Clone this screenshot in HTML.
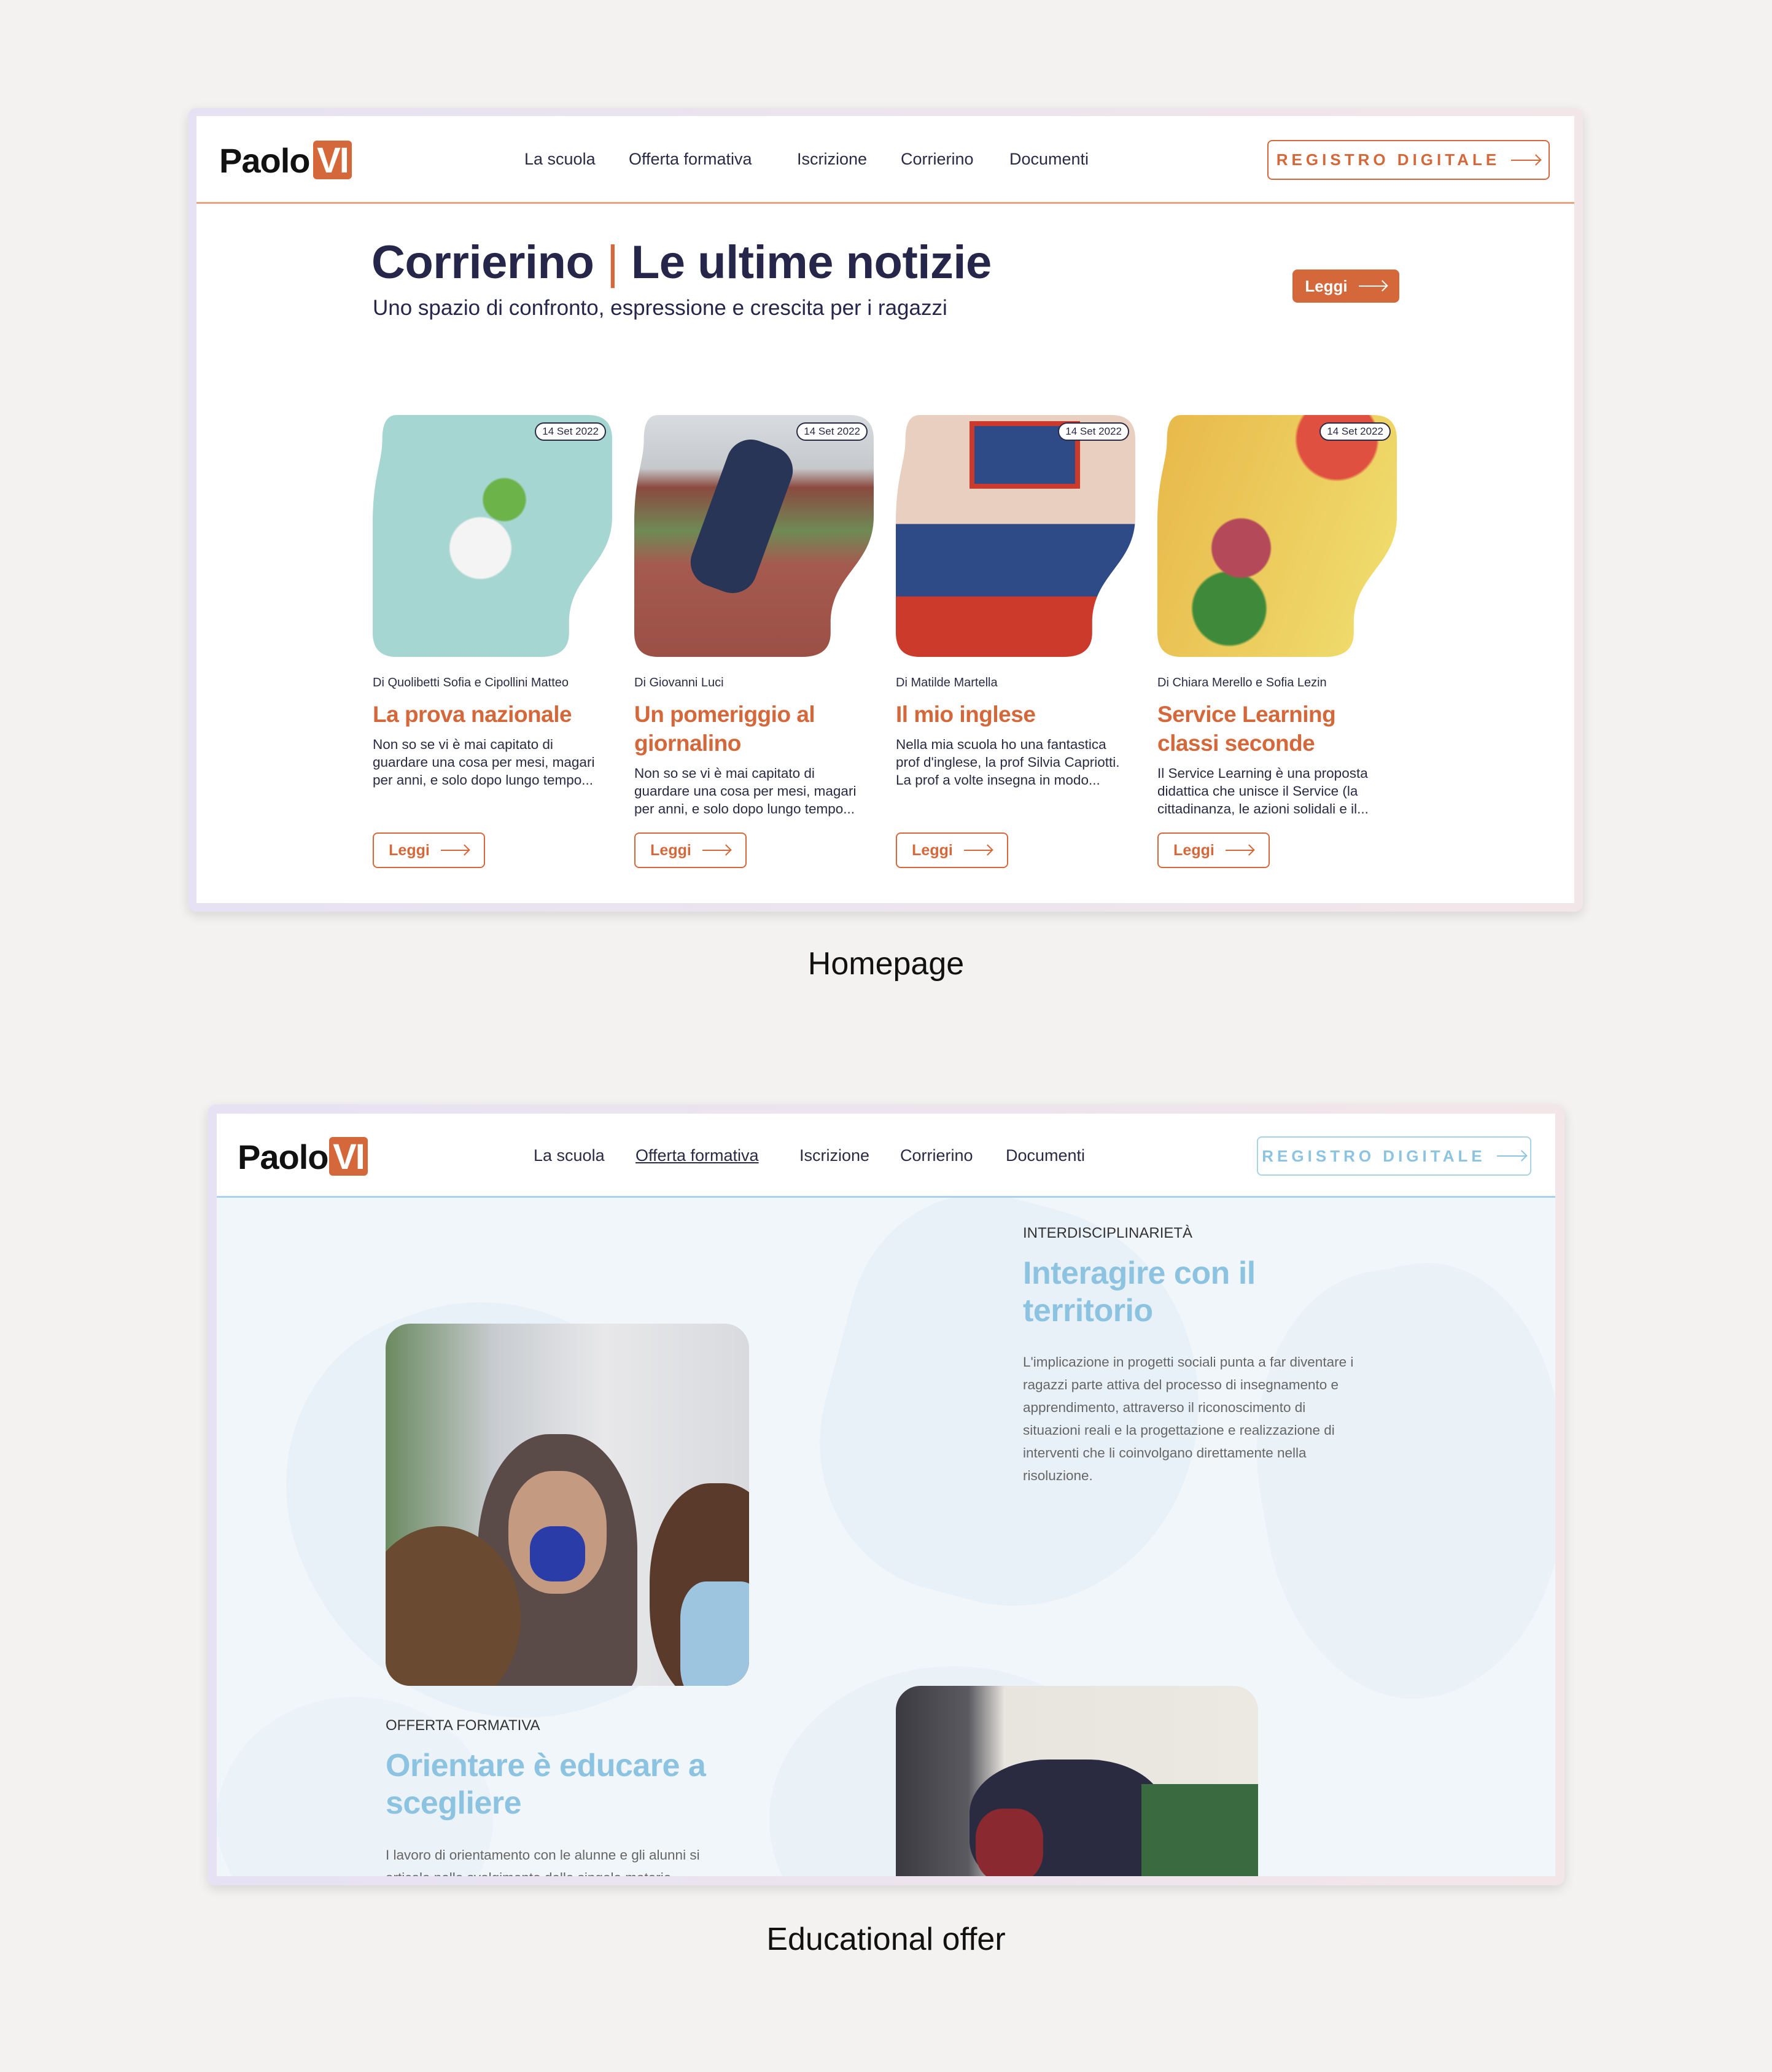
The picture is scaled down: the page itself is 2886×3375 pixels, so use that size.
<!DOCTYPE html>
<html><head><meta charset="utf-8">
<style>
*{margin:0;padding:0;box-sizing:border-box}
body{width:2886px;height:3375px;background:#f3f2f0;font-family:"Liberation Sans",sans-serif;position:relative;overflow:hidden;color:#2a2a45}
.abs{position:absolute}
.frame{position:absolute;border-radius:14px;background:linear-gradient(90deg,#e6e2f3,#f3e6e9);box-shadow:0 6px 18px rgba(0,0,0,.12)}
.inner{position:absolute;background:#fff;overflow:hidden}
.logo{position:absolute;font-weight:bold;font-size:56px;color:#111;letter-spacing:-1px;line-height:1}
.vi{position:absolute;background:#d4683a;color:#fff;font-weight:bold;border-radius:6px;text-align:center;letter-spacing:-2px}
.nav{position:absolute;font-size:27px;color:#2a2a45;white-space:nowrap}
.btn{position:absolute;border:2px solid #d4683a;border-radius:8px;color:#d4683a;font-weight:bold;display:flex;align-items:center;justify-content:center;white-space:nowrap}
.arrow{display:inline-block;position:relative;height:2px;background:currentColor;margin-left:18px}
.arrow:after{content:"";position:absolute;right:1px;top:-6px;width:11px;height:11px;border-top:2px solid currentColor;border-right:2px solid currentColor;transform:rotate(45deg)}
.img{position:absolute;top:676px;width:390px;height:394px;clip-path:url(#blob)}
.date{position:absolute;top:12px;right:10px;background:#fff;border:2px solid #2a2a45;border-radius:16px;font-size:17px;padding:3px 10px;color:#2a2a45}
.author{position:absolute;top:1101px;font-size:20px;color:#2a2a45;white-space:nowrap}
.ctitle{position:absolute;top:1140px;font-size:37px;font-weight:bold;color:#d4683a;line-height:47px;letter-spacing:-0.5px}
.cbody{position:absolute;font-size:22.5px;line-height:29px;color:#2a2a45}
.lb{top:1356px;width:183px;height:58px;font-size:25px}
.caption{position:absolute;width:100%;text-align:center;font-size:52px;color:#111}
</style></head><body>
<svg width="0" height="0" style="position:absolute"><defs>
<clipPath id="blob" clipPathUnits="objectBoundingBox"><path d="M0.1,0 H0.9 Q1,0 1,0.1 V0.42 C1,0.62 0.82,0.66 0.82,0.86 V0.9 Q0.82,1 0.7,1 H0.1 Q0,1 0,0.9 V0.45 C0,0.25 0.04,0.2 0.04,0.1 Q0.04,0 0.1,0 Z"/></clipPath>
</defs></svg>

<div class="frame" style="left:306px;top:176px;width:2272px;height:1309px"></div>
<div class="inner" style="left:320px;top:189px;width:2244px;height:1282px">
  <div class="abs" style="left:0;top:140px;width:100%;height:3px;background:#e8a283"></div>
</div>
<div class="logo" style="left:357px;top:234px">Paolo</div>
<div class="vi" style="left:510px;top:229px;width:63px;height:63px;font-size:58px;line-height:66px">VI</div>
<div class="nav" style="left:854px;top:244px">La scuola</div>
<div class="nav" style="left:1024px;top:244px">Offerta formativa</div>
<div class="nav" style="left:1298px;top:244px">Iscrizione</div>
<div class="nav" style="left:1467px;top:244px">Corrierino</div>
<div class="nav" style="left:1644px;top:244px">Documenti</div>
<div class="btn" style="left:2064px;top:228px;width:460px;height:65px;font-size:26px;letter-spacing:6px">REGISTRO DIGITALE<span class="arrow" style="width:48px"></span></div>

<div class="abs" style="left:605px;top:384px;font-size:76px;font-weight:bold;color:#26264a;white-space:nowrap;letter-spacing:-0.5px">Corrierino <span style="color:#d4683a;font-weight:normal">|</span> Le ultime notizie</div>
<div class="abs" style="left:607px;top:482px;font-size:35px;color:#26264a;white-space:nowrap">Uno spazio di confronto, espressione e crescita per i ragazzi</div>
<div class="btn" style="left:2105px;top:439px;width:174px;height:54px;background:#d4683a;color:#fff;font-size:26px">Leggi<span class="arrow" style="width:46px"></span></div>

<div class="img" style="left:607px;background:radial-gradient(circle at 45% 55%,#f4f4f4 0 16%,transparent 17%),radial-gradient(circle at 55% 35%,#6cb34a 0 10%,transparent 11%),#a6d6d1"><div class="date">14 Set 2022</div></div>
<div class="img" style="left:1033px;background:linear-gradient(180deg,#d8dce0 0%,#c5c9cc 22%,#8a4a40 30%,#6f8a55 48%,#a55a4f 62%,#9b5046 100%)"><div class="abs" style="left:120px;top:40px;width:110px;height:250px;background:#283556;border-radius:40px;transform:rotate(20deg)"></div><div class="date">14 Set 2022</div></div>
<div class="img" style="left:1459px;background:linear-gradient(180deg,#e9cfbf 0 45%,#2e4a87 45% 75%,#cc3a2c 75%)"><div class="abs" style="left:120px;top:10px;width:180px;height:110px;background:#2e4a87;border:8px solid #cc3a2c"></div><div class="date">14 Set 2022</div></div>
<div class="img" style="left:1885px;background:radial-gradient(circle at 35% 55%,#b4495a 0 14%,transparent 15%),radial-gradient(circle at 30% 80%,#3f8a3a 0 14%,transparent 15%),radial-gradient(circle at 75% 10%,#e05040 0 14%,transparent 15%),linear-gradient(110deg,#e8b84a,#f0e070)"><div class="date">14 Set 2022</div></div>

<div class="author" style="left:607px">Di Quolibetti Sofia e Cipollini Matteo</div>
<div class="author" style="left:1033px">Di Giovanni Luci</div>
<div class="author" style="left:1459px">Di Matilde Martella</div>
<div class="author" style="left:1885px">Di Chiara Merello e Sofia Lezin</div>

<div class="ctitle" style="left:607px">La prova nazionale</div>
<div class="ctitle" style="left:1033px">Un pomeriggio al<br>giornalino</div>
<div class="ctitle" style="left:1459px">Il mio inglese</div>
<div class="ctitle" style="left:1885px">Service Learning<br>classi seconde</div>

<div class="cbody" style="left:607px;top:1198px">Non so se vi è mai capitato di<br>guardare una cosa per mesi, magari<br>per anni, e solo dopo lungo tempo...</div>
<div class="cbody" style="left:1033px;top:1245px">Non so se vi è mai capitato di<br>guardare una cosa per mesi, magari<br>per anni, e solo dopo lungo tempo...</div>
<div class="cbody" style="left:1459px;top:1198px">Nella mia scuola ho una fantastica<br>prof d'inglese, la prof Silvia Capriotti.<br>La prof a volte insegna in modo...</div>
<div class="cbody" style="left:1885px;top:1245px">Il Service Learning è una proposta<br>didattica che unisce il Service (la<br>cittadinanza, le azioni solidali e il...</div>

<div class="btn lb" style="left:607px">Leggi<span class="arrow" style="width:46px"></span></div>
<div class="btn lb" style="left:1033px">Leggi<span class="arrow" style="width:46px"></span></div>
<div class="btn lb" style="left:1459px">Leggi<span class="arrow" style="width:46px"></span></div>
<div class="btn lb" style="left:1885px">Leggi<span class="arrow" style="width:46px"></span></div>

<div class="caption" style="top:1540px">Homepage</div>

<div class="frame" style="left:338px;top:1799px;width:2210px;height:1272px"></div>
<div class="inner" style="left:353px;top:1814px;width:2180px;height:1242px;background:#f1f6fa">
  <div class="abs" style="left:130px;top:300px;width:650px;height:700px;background:#e9f1f8;border-radius:45% 55% 40% 60%;transform:rotate(-20deg)"></div>
  <div class="abs" style="left:1000px;top:150px;width:600px;height:650px;background:#e9f1f8;border-radius:40% 60% 55% 45%;transform:rotate(15deg)"></div>
  <div class="abs" style="left:1700px;top:250px;width:500px;height:700px;background:#eaf2f8;border-radius:50% 40% 60% 45%;transform:rotate(-10deg)"></div>
  <div class="abs" style="left:900px;top:900px;width:600px;height:500px;background:#eaf2f8;border-radius:50%"></div>
  <div class="abs" style="left:0;top:950px;width:450px;height:400px;background:#ebf2f8;border-radius:50%"></div>
  <div class="abs" style="left:0;top:0;width:100%;height:134px;background:#fff"></div>
  <div class="abs" style="left:0;top:134px;width:100%;height:3px;background:#a9d1e8"></div>
</div>
<div class="logo" style="left:387px;top:1857px">Paolo</div>
<div class="vi" style="left:536px;top:1852px;width:63px;height:63px;font-size:58px;line-height:66px">VI</div>
<div class="nav" style="left:869px;top:1867px">La scuola</div>
<div class="nav" style="left:1035px;top:1867px;text-decoration:underline">Offerta formativa</div>
<div class="nav" style="left:1302px;top:1867px">Iscrizione</div>
<div class="nav" style="left:1466px;top:1867px">Corrierino</div>
<div class="nav" style="left:1638px;top:1867px">Documenti</div>
<div class="btn" style="left:2047px;top:1851px;width:447px;height:64px;font-size:26px;letter-spacing:6px;border-color:#a9d1e8;color:#8cc3e0">REGISTRO DIGITALE<span class="arrow" style="width:48px"></span></div>

<div class="abs" style="left:1666px;top:1995px;font-size:24px;color:#333">INTERDISCIPLINARIETÀ</div>
<div class="abs" style="left:1666px;top:2044px;font-size:52px;font-weight:bold;color:#8cc3e0;line-height:61px;letter-spacing:-0.5px">Interagire con il<br>territorio</div>
<div class="abs" style="left:1666px;top:2200px;font-size:22.5px;line-height:37px;color:#666">L'implicazione in progetti sociali punta a far diventare i<br>ragazzi parte attiva del processo di insegnamento e<br>apprendimento, attraverso il riconoscimento di<br>situazioni reali e la progettazione e realizzazione di<br>interventi che li coinvolgano direttamente nella<br>risoluzione.</div>

<div class="abs" style="left:628px;top:2156px;width:592px;height:590px;border-radius:40px;overflow:hidden;background:linear-gradient(90deg,#6b8a60 0%,#c8ccd0 30%,#e8e8ea 60%,#d8dade 100%)">
  <div class="abs" style="left:150px;top:180px;width:260px;height:420px;background:#5a4a48;border-radius:45% 45% 10% 10%"></div>
  <div class="abs" style="left:200px;top:240px;width:160px;height:200px;background:#c49a80;border-radius:45%"></div>
  <div class="abs" style="left:235px;top:330px;width:90px;height:90px;background:#2a3ca8;border-radius:40%"></div>
  <div class="abs" style="left:-40px;top:330px;width:260px;height:300px;background:#6a4a30;border-radius:50%"></div>
  <div class="abs" style="left:430px;top:260px;width:220px;height:360px;background:#5a3a2a;border-radius:45%"></div>
  <div class="abs" style="left:480px;top:420px;width:140px;height:200px;background:#9ec5e0;border-radius:30%"></div>
</div>
<div class="abs" style="left:628px;top:2797px;font-size:24px;color:#333">OFFERTA FORMATIVA</div>
<div class="abs" style="left:628px;top:2846px;font-size:52px;font-weight:bold;color:#8cc3e0;line-height:61px;letter-spacing:-0.5px">Orientare è educare a<br>scegliere</div>
<div class="abs" style="left:628px;top:3003px;font-size:22.5px;line-height:37px;color:#666;height:53px;overflow:hidden">I lavoro di orientamento con le alunne e gli alunni si<br>articola nello svolgimento delle singole materie</div>
<div class="abs" style="left:1459px;top:2746px;width:590px;height:310px;border-radius:40px 40px 0 0;overflow:hidden;background:linear-gradient(90deg,#3a3a40 0%,#5a5a60 20%,#e8e4de 30%,#ece8e2 100%)">
  <div class="abs" style="left:120px;top:120px;width:320px;height:220px;background:#2a2a40;border-radius:40%"></div>
  <div class="abs" style="left:130px;top:200px;width:110px;height:120px;background:#8a2a30;border-radius:40%"></div>
  <div class="abs" style="left:400px;top:160px;width:190px;height:150px;background:#3a6a40"></div>
</div>

<div class="caption" style="top:3129px">Educational offer</div>
</body></html>
